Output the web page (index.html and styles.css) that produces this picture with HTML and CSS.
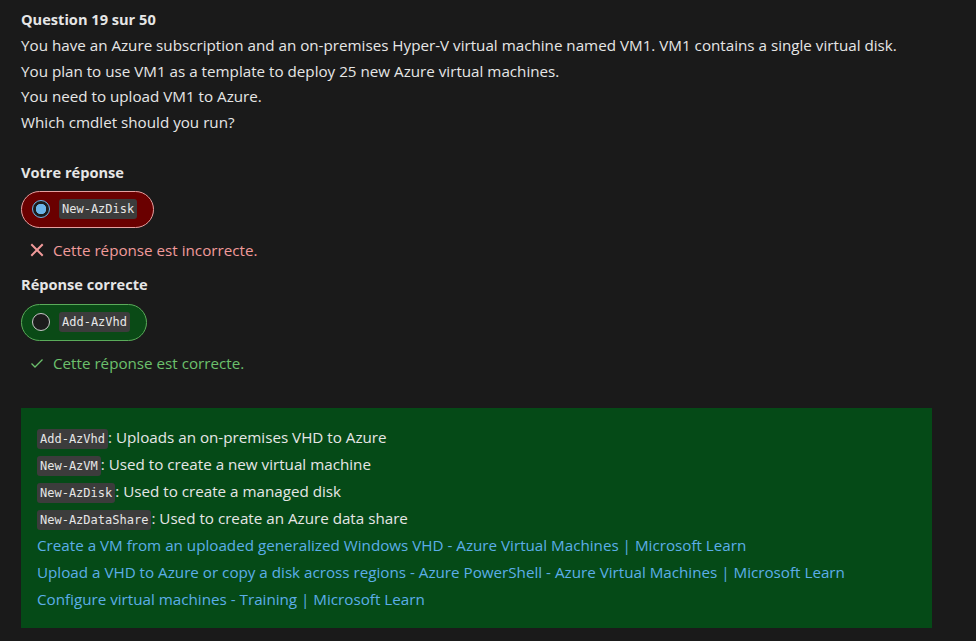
FILE: index.html
```html
<!DOCTYPE html>
<html lang="fr">
<head>
<meta charset="utf-8">
<link rel="stylesheet" href="styles.css">
</head>
<body>
<div class="page">
  <div class="question">
    <div class="q-title">Question 19 sur 50</div>
    <div class="line">You have an Azure subscription and an on-premises Hyper-V virtual machine named VM1. VM1 contains a single virtual disk.</div>
    <div class="line">You plan to use VM1 as a template to deploy 25 new Azure virtual machines.</div>
    <div class="line">You need to upload VM1 to Azure.</div>
    <div class="line">Which cmdlet should you run?</div>
  </div>

  <div class="section-title first">Votre réponse</div>
  <div class="pill pill-wrong">
    <span class="radio radio-checked"></span>
    <code class="chip">New-AzDisk</code>
  </div>
  <div class="feedback wrong">
    <svg class="fb-icon" width="14" height="14" viewBox="0 0 14 14"><path d="M2 2 L12 12 M12 2 L2 12" stroke="currentColor" stroke-width="2" stroke-linecap="square" fill="none"/></svg>
    <span>Cette réponse est incorrecte.</span>
  </div>

  <div class="section-title">Réponse correcte</div>
  <div class="pill pill-right">
    <span class="radio"></span>
    <code class="chip">Add-AzVhd</code>
  </div>
  <div class="feedback right">
    <svg class="fb-icon" width="14" height="14" viewBox="0 0 14 14"><path d="M1.5 7.5 L5 11 L12.5 3.5" stroke="currentColor" stroke-width="1.3" fill="none"/></svg>
    <span>Cette réponse est correcte.</span>
  </div>

  <div class="explain">
    <div class="line"><code class="chip small">Add-AzVhd</code>: Uploads an on-premises VHD to Azure</div>
    <div class="line"><code class="chip small">New-AzVM</code>: Used to create a new virtual machine</div>
    <div class="line"><code class="chip small">New-AzDisk</code>: Used to create a managed disk</div>
    <div class="line"><code class="chip small">New-AzDataShare</code>: Used to create an Azure data share</div>
    <div class="line"><a href="#">Create a VM from an uploaded generalized Windows VHD - Azure Virtual Machines | Microsoft Learn</a></div>
    <div class="line"><a href="#">Upload a VHD to Azure or copy a disk across regions - Azure PowerShell - Azure Virtual Machines | Microsoft Learn</a></div>
    <div class="line"><a href="#">Configure virtual machines - Training | Microsoft Learn</a></div>
  </div>
</div>
</body>
</html>
```
FILE: styles.css
```css
* { box-sizing: border-box; }
html, body { margin: 0; padding: 0; }
body {
  background: #1a1a1a;
  color: #e6e6e6;
  font-family: "Open Sans", "Noto Sans", sans-serif;
  font-size: 15.2px;
}
.page {
  padding: 7px 44px 0 21px;
}
.line, .q-title {
  line-height: 25.75px;
}
.q-title { font-weight: 700; font-size: 14.6px; }
.section-title {
  font-weight: 700;
  font-size: 14.6px;
  line-height: 26px;
  margin-top: 8px;
}
.section-title.first { margin-top: 23px; }
.pill {
  display: inline-flex;
  align-items: center;
  gap: 9px;
  height: 37px;
  padding: 0 16px 0 10px;
  border-radius: 19px;
  border: 1px solid;
  margin-top: 6px;
}
.pill-right { margin-top: 7px; }
.pill-wrong { background: #6a0000; border-color: #e6a0a0; }
.pill-right { background: #0a4a16; border-color: #5aab5a; }
.radio {
  width: 18px;
  height: 18px;
  border-radius: 50%;
  border: 1.5px solid #c8c8c8;
  background: #1c1c1c;
  display: inline-block;
}
.radio-checked {
  border-color: #6cb4ea;
  background: radial-gradient(circle, #6cb4ea 0 5px, #1c1c1c 5.5px);
}
.chip {
  font-family: "DejaVu Sans Mono", "Liberation Mono", monospace;
  font-size: 12px;
  line-height: 1;
  background: #3c3c3c;
  color: #e6e6e6;
  border-radius: 3px;
  padding: 4px 3px;
}
.chip.small { padding: 3px 3px; }
.feedback {
  display: flex;
  align-items: center;
  gap: 9px;
  padding-left: 9px;
  line-height: 26px;
  margin-top: 9px;
}
.feedback.wrong { color: #f19a9a; }
.feedback.right { color: #6cc06c; }
.fb-icon { display: block; }
.explain {
  background: #054a17;
  margin-top: 32px;
  padding: 16px 16px 15px;
  color: #e6e6e6;
}
.explain .line { line-height: 27px; }
.explain a {
  color: #5caee8;
  text-decoration: none;
}
```
